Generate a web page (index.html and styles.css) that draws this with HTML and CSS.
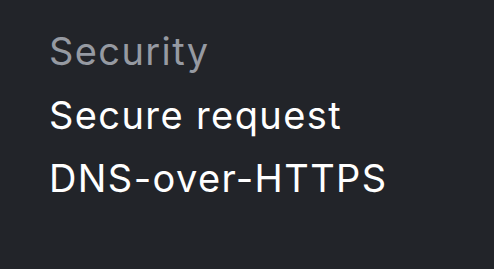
FILE: index.html
```html
<!DOCTYPE html>
<html>
<head>
<meta charset="utf-8">
<link rel="stylesheet" href="styles.css">
</head>
<body>
<div class="menu">
  <div class="heading">Security</div>
  <div class="item">Secure request</div>
  <div class="item">DNS-over-HTTPS</div>
</div>
</body>
</html>
```
FILE: styles.css
```css
html, body {
  margin: 0;
  padding: 0;
  background: #222429;
  height: 100%;
}
.menu {
  display: flex;
  flex-direction: column;
  padding: 20px 0 0 49px;
  font-family: Inter, "Noto Sans", sans-serif;
  font-size: 38px;
  line-height: 63.5px;
  letter-spacing: 1.4px;
}
.heading {
  color: #969aa2;
}
.item {
  color: #ffffff;
}
```
